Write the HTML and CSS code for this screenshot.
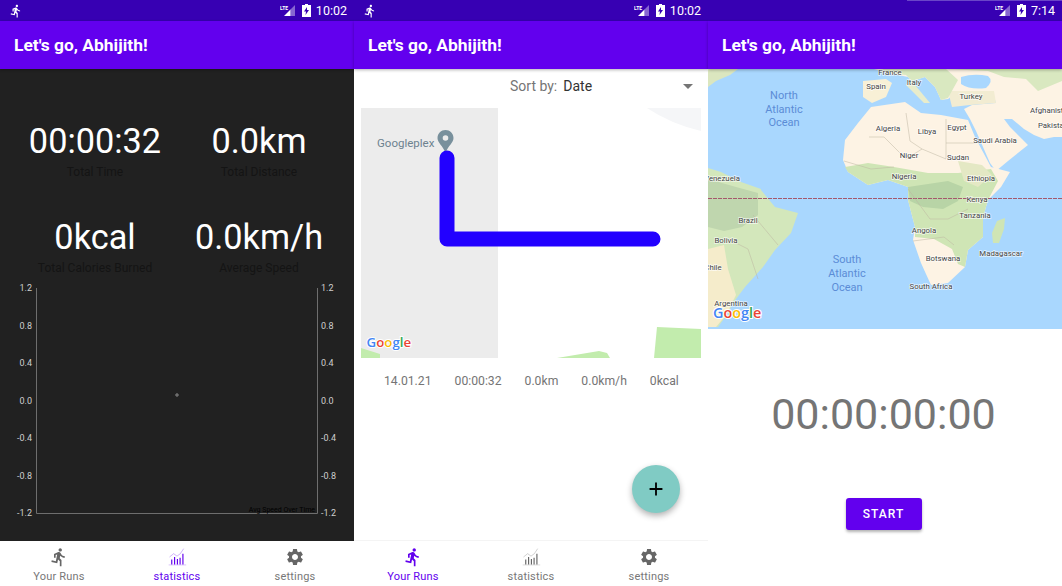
FILE: index.html
```html
<!DOCTYPE html>
<html lang="en">
<head>
    <meta charset="UTF-8">
    <title>Running app</title>
    <link rel="stylesheet" href="styles.css">
</head>
<body>
<svg class="defs" width="0" height="0">
    <symbol id="i-run" viewBox="0 0 24 24"><path d="M13.49 5.48c1.1 0 2-.9 2-2s-.9-2-2-2-2 .9-2 2 .9 2 2 2zm-3.6 13.9l1-4.4 2.1 2v6h2v-7.5l-2.1-2 .6-3c1.3 1.5 3.3 2.5 5.5 2.5v-2c-1.9 0-3.5-1-4.3-2.4l-1-1.6c-.4-.6-1-1-1.7-1-.3 0-.5.1-.8.1l-5.2 2.2v4.7h2v-3.4l1.8-.7-1.6 8.1-4.9-1-.4 2 7 1.4z"/></symbol>
    <symbol id="i-gear" viewBox="0 0 24 24"><path d="M19.14 12.94c.04-.3.06-.61.06-.94 0-.32-.02-.64-.07-.94l2.03-1.58c.18-.14.23-.41.12-.61l-1.92-3.32c-.12-.22-.37-.29-.59-.22l-2.39.96c-.5-.38-1.03-.7-1.62-.94l-.36-2.54c-.04-.24-.24-.41-.48-.41h-3.84c-.24 0-.43.17-.47.41l-.36 2.54c-.59.24-1.13.57-1.62.94l-2.39-.96c-.22-.08-.47 0-.59.22L2.74 8.87c-.12.21-.08.47.12.61l2.03 1.58c-.05.3-.09.63-.09.94s.02.64.07.94l-2.03 1.58c-.18.14-.23.41-.12.61l1.92 3.32c.12.22.37.29.59.22l2.39-.96c.5.38 1.03.7 1.62.94l.36 2.54c.05.24.24.41.48.41h3.84c.24 0 .44-.17.47-.41l.36-2.54c.59-.24 1.13-.56 1.62-.94l2.39.96c.22.08.47 0 .59-.22l1.92-3.32c.12-.22.07-.47-.12-.61l-2.01-1.58zM12 15.6c-1.98 0-3.6-1.62-3.6-3.6s1.62-3.6 3.6-3.6 3.6 1.62 3.6 3.6-1.62 3.6-3.6 3.6z"/></symbol>
    <symbol id="i-stats" viewBox="0 0 24 24">
        <path d="M5 21v-6h1.4v6zM8.4 21v-9h1.4v9zM11.8 21v-6.5h1.4v6.5zM15 21v-8h1.4v8zM18.4 21V8h1.4v13z"/>
        <path d="M2 21.5h21" stroke="currentColor" stroke-width=".6" opacity=".45"/>
        <path d="M3 12l5-4 4 3 4-3 4-6" fill="none" stroke="currentColor" stroke-width=".9" opacity=".4"/>
    </symbol>
    <symbol id="i-lte" viewBox="0 0 16 12">
        <path d="M10.5 4.5L15 0v11h-4.5z" fill="#fff" fill-opacity=".4"/>
        <path d="M4 11l6.5-6.5V11z" fill="#fff"/>
        <text x="0" y="5" class="lte-text">LTE</text>
    </symbol>
    <symbol id="i-battery" viewBox="0 0 9 13">
        <path fill-rule="evenodd" d="M3 0h3v1h3v12H0V1h3zM5 3L2 7.5h2L3.5 11 7 6H5z"/>
    </symbol>
</svg>

<div class="screens">
    <!-- statistics -->
    <section class="phone phone-stats">
        <div class="status">
            <svg class="status-run"><use href="#i-run"/></svg>
            <span class="status-right">
                <svg class="status-lte"><use href="#i-lte"/></svg>
                <svg class="status-batt"><use href="#i-battery"/></svg>
                <span>10:02</span>
            </span>
        </div>
        <header class="appbar">Let's go, Abhijith!</header>
        <main class="stats-body">
            <div class="stats-grid">
                <div class="stat"><div class="stat-value">00:00:32</div><div class="stat-label">Total Time</div></div>
                <div class="stat"><div class="stat-value">0.0km</div><div class="stat-label">Total Distance</div></div>
                <div class="stat"><div class="stat-value">0kcal</div><div class="stat-label">Total Calories Burned</div></div>
                <div class="stat"><div class="stat-value">0.0km/h</div><div class="stat-label">Average Speed</div></div>
            </div>
            <svg class="chart" viewBox="0 0 354 240" width="354" height="240">
                <path class="chart-axis" d="M36.5 5V230.5H317.5V5"/>
                <circle class="chart-dot" cx="177" cy="112" r="1.2"/>
                <g class="chart-nums">
                    <text x="32" y="8">1.2</text><text x="32" y="46">0.8</text><text x="32" y="83">0.4</text><text x="32" y="120.5">0.0</text>
                    <text x="32" y="158">-0.4</text><text x="32" y="196">-0.8</text><text x="32" y="233">-1.2</text>
                </g>
                <g class="chart-nums chart-nums-right">
                    <text x="321" y="8">1.2</text><text x="321" y="46">0.8</text><text x="321" y="83">0.4</text><text x="321" y="120.5">0.0</text>
                    <text x="321" y="158">-0.4</text><text x="321" y="196">-0.8</text><text x="321" y="233">-1.2</text>
                </g>
                <text class="chart-desc" x="315" y="229">Avg Speed Over Time</text>
            </svg>
        </main>
        <nav class="bottom-nav">
            <div class="nav-item"><svg><use href="#i-run"/></svg><span>Your Runs</span></div>
            <div class="nav-item is-active"><svg><use href="#i-stats"/></svg><span>statistics</span></div>
            <div class="nav-item"><svg><use href="#i-gear"/></svg><span>settings</span></div>
        </nav>
    </section>

    <!-- runs list -->
    <section class="phone phone-runs">
        <div class="status">
            <svg class="status-run"><use href="#i-run"/></svg>
            <span class="status-right">
                <svg class="status-lte"><use href="#i-lte"/></svg>
                <svg class="status-batt"><use href="#i-battery"/></svg>
                <span>10:02</span>
            </span>
        </div>
        <header class="appbar">Let's go, Abhijith!</header>
        <main class="runs-body">
            <div class="sort-row">
                <span class="sort-label">Sort by:</span>
                <span class="sort-value">Date</span>
                <span class="sort-caret"></span>
            </div>
            <svg class="run-map" viewBox="0 0 340 250" width="340" height="250">
                <rect width="340" height="250" fill="#fff"/>
                <rect width="137" height="250" fill="#ececec"/>
                <path d="M0 240L19 246V250H0z" fill="#c2ecad"/>
                <path d="M196 250L238 243 246 245 249 250z" fill="#c2ecad"/>
                <path d="M296 219L340 221V250H293z" fill="#c2ecad"/>
                <path d="M286 0Q310 16 340 23V0z" fill="#f5f6f8"/>
                <path fill-rule="evenodd" d="M84.5 22c-4.4 0-8 3.5-8 8 0 5 5 7 8 15 3-8 8-10 8-15 0-4.5-3.6-8-8-8zm0 5.2a2.8 2.8 0 1 1 0 5.6 2.8 2.8 0 0 1 0-5.600z" fill="#78909c"/>
                <path d="M86 50V131H292" class="run-track"/>
                <text x="16" y="39" class="poi">Googleplex</text>
                <text x="5.5" y="239" class="glogo glogo-small"><tspan fill="#4285f4">G</tspan><tspan fill="#ea4335">o</tspan><tspan fill="#fbbc05">o</tspan><tspan fill="#4285f4">g</tspan><tspan fill="#34a853">l</tspan><tspan fill="#ea4335">e</tspan></text>
            </svg>
            <div class="run-row">
                <span>14.01.21</span><span>00:00:32</span><span>0.0km</span><span>0.0km/h</span><span>0kcal</span>
            </div>
            <button class="fab"><svg viewBox="0 0 24 24" width="22" height="22"><path d="M19 13h-6v6h-2v-6H5v-2h6V5h2v6h6z"/></svg></button>
        </main>
        <nav class="bottom-nav bottom-nav-line">
            <div class="nav-item is-active"><svg><use href="#i-run"/></svg><span>Your Runs</span></div>
            <div class="nav-item"><svg><use href="#i-stats"/></svg><span>statistics</span></div>
            <div class="nav-item"><svg><use href="#i-gear"/></svg><span>settings</span></div>
        </nav>
    </section>

    <!-- tracking -->
    <section class="phone phone-track">
        <div class="status">
            <span class="status-right">
                <svg class="status-lte"><use href="#i-lte"/></svg>
                <svg class="status-batt"><use href="#i-battery"/></svg>
                <span>7:14</span>
            </span>
        </div>
        <header class="appbar">Let's go, Abhijith!</header>
        <svg class="world-map" viewBox="0 0 354 260" width="354" height="260">
            <rect width="354" height="260" fill="#a9d7fe"/>
            <!-- greenland corner -->
            <path d="M0 0H30L22 6 8 12 0 18z" fill="#dbe6bf"/>
            <!-- europe, middle east -->
            <path d="M166 0H354V68L346 68 336 70 326 66 316 60 304 50 296 50 302 58 314 70 320 76 300 92 288 102 282 94 268 62 262 50 256 40 264 36 288 34 284 22 250 22 240 30 233 31 227 18 217 8 204 12 200 8 190 6 180 4z" fill="#fdf3e4"/>
            <path d="M155 12L178 10 184 14 178 28 164 34 155 28z" fill="#f8f0d6"/>
            <path d="M202 10L212 22 222 34 216 34 208 26 198 16z" fill="#e8eccb"/>
            <path d="M238 0H354V12L330 22 318 10 296 8 280 2z" fill="#d9e8c0"/>
            <path d="M240 22H286L288 34 262 36 244 38z" fill="#f2ecd2"/>
            <path d="M172 0H238L250 11 240 29 233 31 227 18 217 8 204 12 198 6 180 4z" fill="#d9e8c0"/>
            <path d="M253 8Q266 4 280 7 286 12 278 19 262 21 253 15z" fill="#a9d7fe"/>
            <!-- africa -->
            <path d="M163 38L197 33 213 44 233 46 260 51 267 68 283 98 302 103 293 118 280 131 275 148 275 168 260 181 257 198 240 214 223 216 213 194 205 171 207 158 200 131 200 118 180 111 160 116 140 103 135 91 137 71 150 54z" fill="#fdf3e4"/>
            <path d="M137 98L160 94 186 98 220 104 250 104 283 100 290 112 280 131 275 148 275 168 260 181 257 198 250 195 244 180 226 170 207 168 207 158 200 131 200 118 180 111 160 116 140 103z" fill="#cfe5b5"/>
            <path d="M200 118L240 112 255 118 250 132 235 140 215 138 202 132z" fill="#b8d4a6"/>
            <path d="M250 92L274 96 284 106 270 118 256 112z" fill="#e4e8c4"/>
            <path d="M289 152L297 149 296 160 291 174 285 174 284 164z" fill="#cfe5b5"/>
            <!-- south america -->
            <path d="M0 99L13 103 33 113 53 120 53 121 67 138 90 144 83 164 67 181 55 198 37 218 25 234 20 244 10 258 0 258z" fill="#d3e7bb"/>
            <path d="M0 110L28 118 50 124 50 146 34 158 16 162 0 158z" fill="#bfd6ae"/>
            <path d="M0 180L16 176 20 200 28 226 18 246 8 258H0z" fill="#f5eccb"/>
            <!-- equator -->
            <path class="equator" d="M0 129.5H354"/>
            <!-- borders -->
            <g class="borders">
                <path d="M161 68H176L198 90 214 80 238 90 238 50M198 44L202 72 214 80M136 92L163 100 186 98M238 74H268M200 120L222 150 240 150 260 140M205 172L236 168 246 176M20 170L40 180 50 210M45 146L70 176"/>
            </g>
            <g class="map-ocean">
                <text x="76" y="30">North</text><text x="76" y="43.5">Atlantic</text><text x="76" y="57">Ocean</text>
                <text x="139" y="194">South</text><text x="139" y="207.5">Atlantic</text><text x="139" y="221.5">Ocean</text>
            </g>
            <g class="map-labels">
                <text x="182" y="6">France</text><text x="168" y="20">Spain</text><text x="206" y="16">Italy</text><text x="263" y="30">Turkey</text>
                <text x="180" y="62">Algeria</text><text x="219" y="65">Libya</text><text x="249" y="61">Egypt</text><text x="287" y="74">Saudi Arabia</text>
                <text x="343" y="44">Afghanistan</text><text x="345" y="59">Pakistan</text>
                <text x="201" y="89">Niger</text><text x="250" y="91">Sudan</text><text x="196" y="110">Nigeria</text><text x="273" y="112">Ethiopia</text>
                <text x="14" y="112">Venezuela</text><text x="269" y="133">Kenya</text><text x="267" y="149">Tanzania</text>
                <text x="40" y="154">Brazil</text><text x="18" y="174">Bolivia</text><text x="216" y="164">Angola</text><text x="235" y="192">Botswana</text>
                <text x="293" y="187">Madagascar</text><text x="223" y="220">South Africa</text><text x="5" y="201">Chile</text><text x="23" y="237">Argentina</text>
            </g>
            <text x="5" y="249" class="glogo"><tspan fill="#4285f4">G</tspan><tspan fill="#ea4335">o</tspan><tspan fill="#fbbc05">o</tspan><tspan fill="#4285f4">g</tspan><tspan fill="#34a853">l</tspan><tspan fill="#ea4335">e</tspan></text>
        </svg>
        <main class="track-body">
            <div class="timer">00:00:00:00</div>
            <button class="start-btn">START</button>
        </main>
    </section>
</div>
</body>
</html>
```

FILE: styles.css
```css
html * {
    box-sizing: border-box;
}

body {
    margin: 0;
    background: #fff;
    color: #757575;
    font-family: Roboto, "Liberation Sans", sans-serif;
    overflow: hidden;
}

.defs {
    position: absolute;
}

.screens {
    display: flex;
    height: 586px;
}

.phone {
    display: flex;
    flex-direction: column;
    position: relative;
    width: 354px;
    height: 586px;
    background: #fff;
}

.status {
    display: flex;
    align-items: center;
    flex: none;
    height: 21px;
    padding: 0 7px 0 9px;
    background: #3700b3;
    color: #fff;
    font-size: 12.5px;
}

.status svg {
    fill: #fff;
}

.status-run {
    width: 14px;
    height: 14px;
}

.status-right {
    display: flex;
    align-items: center;
    margin-left: auto;
}

.status-lte {
    width: 16px;
    height: 12px;
    margin-right: 6px;
}

.lte-text {
    font-size: 5px;
    font-weight: 700;
}

.status-batt {
    width: 9px;
    height: 13px;
    margin-right: 5px;
}

.phone-track .status::before {
    content: "";
    position: absolute;
    top: 0;
    right: 0;
    width: 155px;
    height: 1px;
    background: #6a45c8;
}

.appbar {
    flex: none;
    height: 48px;
    padding: 0 14px;
    background: #6200ee;
    color: #fff;
    font-size: 17.4px;
    font-weight: 700;
    line-height: 48px;
    box-shadow: 0 1px 3px rgba(0, 0, 0, .3);
    position: relative;
}

/* statistics */
.stats-body {
    flex: 1;
    background: #212121;
    min-height: 0;
}

.stats-grid {
    display: grid;
    grid-template-columns: 164px 164px;
    grid-auto-rows: 96px;
    padding: 52px 13px 0;
}

.stat {
    text-align: center;
}

.stat-value {
    color: #fff;
    font-size: 34.3px;
    line-height: 40px;
}

.stat-label {
    color: #141414;
    font-size: 12px;
    line-height: 20px;
    padding-top: 1px;
}

.chart {
    display: block;
    margin-top: -30px;
}

.chart-axis {
    fill: none;
    stroke: #6e6e6e;
}

.chart-dot {
    fill: none;
    stroke: #aaa;
    stroke-width: .8;
}

.chart-nums text {
    fill: #cfcfcf;
    font-size: 9px;
    text-anchor: end;
}

.chart-nums-right text {
    text-anchor: start;
}

.chart-desc {
    fill: #000;
    font-size: 7px;
    text-anchor: end;
}

/* bottom nav */
.bottom-nav {
    display: grid;
    grid-template-columns: 118px 118px 118px;
    flex: none;
    height: 45px;
    background: #fff;
}

.bottom-nav-line {
    height: 46px;
    border-top: 1px solid #f4f4f4;
}

.nav-item {
    display: flex;
    flex-direction: column;
    align-items: center;
    color: #666;
    font-size: 11px;
    letter-spacing: .2px;
    padding-top: 6px;
}

.nav-item svg {
    width: 20px;
    height: 20px;
    fill: currentColor;
    margin-bottom: 3px;
}

.nav-item span {
    line-height: 13px;
    color: #777;
}

.nav-item.is-active,
.nav-item.is-active span {
    color: #6200ee;
}

/* run list */
.runs-body {
    flex: 1;
    position: relative;
    min-height: 0;
}

.sort-row {
    display: flex;
    align-items: center;
    height: 39px;
    padding: 0 15px 5px 156px;
    font-size: 14px;
}

.sort-label {
    color: #757575;
}

.sort-value {
    color: #333;
    margin-left: 6px;
}

.sort-caret {
    margin-left: auto;
    border-left: 5px solid transparent;
    border-right: 5px solid transparent;
    border-top: 5px solid #757575;
}

.run-map {
    display: block;
    margin-left: 7px;
}

.poi {
    fill: #6d828f;
    font-size: 11.5px;
}

.run-track {
    fill: none;
    stroke: #2200ff;
    stroke-width: 15;
    stroke-linecap: round;
    stroke-linejoin: round;
}

.glogo {
    font-family: "Open Sans", sans-serif;
    font-size: 14.4px;
    font-weight: 600;
    stroke: #fff;
    stroke-width: 2px;
    paint-order: stroke;
}

.glogo-small {
    font-size: 13.3px;
}

.run-row {
    display: flex;
    gap: 23px;
    padding: 16px 0 0 30px;
    font-size: 12.2px;
    line-height: 14px;
    color: #757575;
}

.fab {
    position: absolute;
    right: 28px;
    bottom: 27px;
    display: flex;
    align-items: center;
    justify-content: center;
    width: 48px;
    height: 48px;
    padding: 0;
    border: 0;
    border-radius: 50%;
    background: #80cbc4;
    box-shadow: 0 3px 6px rgba(0, 0, 0, .3);
}

/* tracking */
.world-map {
    display: block;
    flex: none;
}

.equator {
    fill: none;
    stroke: #a5586c;
    stroke-dasharray: 4 1;
}

.borders path {
    fill: none;
    stroke: #bdb5a0;
    stroke-width: .5;
}

.map-ocean text {
    fill: #5b8cd6;
    font-size: 11px;
    text-anchor: middle;
}

.map-labels text {
    fill: #444;
    font-size: 7.8px;
    text-anchor: middle;
    stroke: #fff;
    stroke-width: 1.5px;
    stroke-opacity: .7;
    paint-order: stroke;
}

.track-body {
    display: flex;
    flex-direction: column;
    align-items: center;
    flex: 1;
    padding-right: 3px;
}

.timer {
    margin-top: 58px;
    font-size: 43px;
    line-height: 54px;
    color: #757575;
}

.start-btn {
    width: 76px;
    height: 32px;
    margin-top: 57px;
    border: 0;
    border-radius: 3px;
    background: #6200ee;
    color: #fff;
    font-family: inherit;
    font-size: 12px;
    font-weight: 500;
    letter-spacing: 1px;
    box-shadow: 0 2px 3px rgba(0, 0, 0, .3);
}
```
